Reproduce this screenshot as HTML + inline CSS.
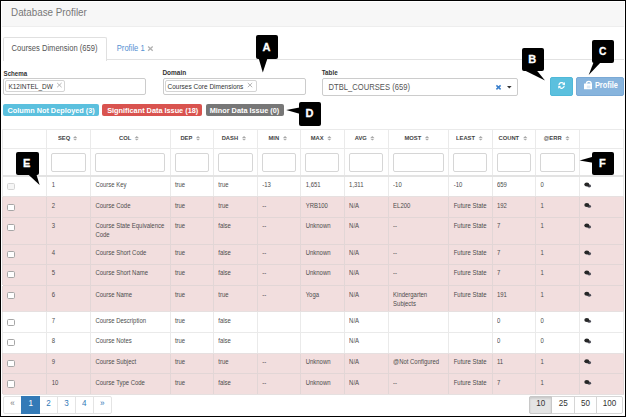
<!DOCTYPE html>
<html><head><meta charset="utf-8"><style>
html,body{margin:0;padding:0;width:626px;height:417px;overflow:hidden;background:#fff}
body{position:relative;font-family:"Liberation Sans", sans-serif}
body>div,body>svg{position:absolute;white-space:nowrap}
</style></head><body>
<div style="left:0.00px;top:0.00px;width:626.00px;height:417.00px;background:#000"></div>
<div style="left:1.00px;top:1.00px;width:624.00px;height:415.00px;background:#fff"></div>
<div style="left:2.00px;top:2.00px;width:622.00px;height:25.00px;background:#f7f7f7;border-bottom:1px solid #eeeeee;box-sizing:border-box"></div>
<div style="left:11.10px;top:7.70px;font-size:9.80px;line-height:9.80px;color:#777;transform:scaleY(1.03);transform-origin:0 8.30px;">Database Profiler</div>
<div style="left:106.00px;top:59.00px;width:517.50px;height:1.00px;background:#e2e2e2"></div>
<div style="left:3.00px;top:37.00px;width:104.00px;height:24.00px;background:#fff;border:1px solid #e0e0e0;border-bottom:none;border-radius:2px 2px 0 0;box-sizing:border-box"></div>
<div style="left:11.60px;top:44.88px;font-size:7.59px;line-height:7.59px;color:#555;transform:scaleY(1.1);transform-origin:0 6.42px;">Courses Dimension (659)</div>
<div style="left:116.80px;top:44.88px;font-size:7.59px;line-height:7.59px;color:#5591d2;transform:scaleY(1.1);transform-origin:0 6.42px;">Profile 1</div>
<svg style="left:0;top:0" width="626" height="417"><path d="M148.1 46.6L152.7 50.8M152.7 46.6L148.1 50.8" stroke="#b0b0b0" stroke-width="1.3"/></svg>
<div style="left:3.50px;top:70.55px;font-size:6.20px;line-height:6.20px;color:#333;font-weight:bold;transform:scaleY(1.1);transform-origin:0 5.25px;">Schema</div>
<div style="left:162.40px;top:70.30px;font-size:6.50px;line-height:6.50px;color:#333;font-weight:bold;transform:scaleY(1.1);transform-origin:0 5.50px;">Domain</div>
<div style="left:321.70px;top:70.47px;font-size:6.30px;line-height:6.30px;color:#333;font-weight:bold;transform:scaleY(1.1);transform-origin:0 5.33px;">Table</div>
<div style="left:3.00px;top:78.00px;width:142.50px;height:16.50px;border:1px solid #ccc;border-radius:2px;box-sizing:border-box;background:#fff"></div>
<div style="left:5.20px;top:80.20px;width:59.40px;height:12.10px;border:1px solid #d4d4d4;border-radius:2px;box-sizing:border-box;background:#fff"></div>
<div style="left:8.40px;top:84.10px;font-size:6.50px;line-height:6.50px;color:#333;transform:scaleY(1.1);transform-origin:0 5.50px;">K12INTEL_DW</div>
<svg style="left:0;top:0" width="626" height="417"><path d="M57.2 83.0L61.6 87.2M61.6 83.0L57.2 87.2" stroke="#aaa" stroke-width="0.9"/></svg>
<div style="left:162.50px;top:78.00px;width:143.00px;height:16.50px;border:1px solid #ccc;border-radius:2px;box-sizing:border-box;background:#fff"></div>
<div style="left:164.60px;top:80.10px;width:92.00px;height:12.30px;border:1px solid #d4d4d4;border-radius:2px;box-sizing:border-box;background:#fff"></div>
<div style="left:167.50px;top:84.10px;font-size:6.50px;line-height:6.50px;color:#333;transform:scaleY(1.1);transform-origin:0 5.50px;">Courses Core Dimensions</div>
<svg style="left:0;top:0" width="626" height="417"><path d="M247.8 83.0L252.2 87.2M252.2 83.0L247.8 87.2" stroke="#aaa" stroke-width="0.9"/></svg>
<div style="left:322.00px;top:78.00px;width:196.00px;height:18.20px;border:1px solid #ccc;border-radius:2px;box-sizing:border-box;background:#fff"></div>
<div style="left:328.60px;top:84.04px;font-size:7.63px;line-height:7.63px;color:#555;transform:scaleY(1.1);transform-origin:0 6.46px;">DTBL_COURSES (659)</div>
<svg style="left:0;top:0" width="626" height="417"><path d="M496.4 85.4L500.6 89.4M500.6 85.4L496.4 89.4" stroke="#3a7fcc" stroke-width="1.5"/></svg>
<svg style="left:0;top:0" width="626" height="417"><polygon points="507,86.1 511.6,86.1 509.3,88.4" fill="#333"/></svg>
<div style="left:549.50px;top:77.00px;width:23.90px;height:18.60px;background:#5bc0de;border:1px solid #4fb8d8;box-sizing:border-box;border-radius:2px"></div>
<svg style="left:0;top:0" width="626" height="417"><g transform="translate(561.6 85.5) scale(0.88) translate(-561.6 -85.5)"><g fill="none" stroke="#fff" stroke-width="1.4"><path d="M558.6 85 A3 3 0 0 1 564 83.4"/><path d="M564.6 85.8 A3 3 0 0 1 559.2 87.4"/></g><polygon points="565.4,81.6 565.4,85 562.2,84.6" fill="#fff"/><polygon points="557.8,89.2 557.8,85.8 561,86.2" fill="#fff"/></g></svg>
<div style="left:576.00px;top:77.00px;width:47.80px;height:18.60px;background:#87b4dd;border:1px solid #7aa9d5;box-sizing:border-box;border-radius:2px"></div>
<svg style="left:0;top:0" width="626" height="417"><path d="M586.4 83.8 A2.3 2.3 0 0 1 591.2 83.8 V84.4" fill="none" stroke="#fff" stroke-width="1.3"/><rect x="584" y="83.6" width="8" height="5.7" rx="0.4" fill="#fff"/><rect x="586.8" y="85.6" width="3.6" height="2.6" fill="#dde9f5"/></svg>
<div style="left:594.90px;top:81.64px;font-size:7.40px;line-height:7.40px;color:#fff;font-weight:bold;transform:scaleY(1.1);transform-origin:0 6.26px;">Profile</div>
<div style="left:3.20px;top:104.30px;width:96.20px;height:12.20px;background:#5bc0de;border-radius:2px"></div>
<div style="left:7.40px;top:106.70px;font-size:7.32px;line-height:7.32px;color:#fff;font-weight:bold;transform:scaleY(1.1);transform-origin:0 6.20px;">Column Not Deployed (3)</div>
<div style="left:102.30px;top:104.30px;width:100.00px;height:12.20px;background:#d9534f;border-radius:2px"></div>
<div style="left:107.20px;top:106.70px;font-size:7.32px;line-height:7.32px;color:#fff;font-weight:bold;transform:scaleY(1.1);transform-origin:0 6.20px;">Significant Data Issue (18)</div>
<div style="left:205.75px;top:104.30px;width:78.25px;height:12.20px;background:#777;border-radius:2px"></div>
<div style="left:209.70px;top:106.70px;font-size:7.32px;line-height:7.32px;color:#fff;font-weight:bold;transform:scaleY(1.1);transform-origin:0 6.20px;">Minor Data Issue (0)</div>
<div style="left:2.50px;top:196.70px;width:620.80px;height:20.60px;background:#f2dede"></div>
<div style="left:2.50px;top:217.30px;width:620.80px;height:26.80px;background:#f2dede"></div>
<div style="left:2.50px;top:244.10px;width:620.80px;height:20.20px;background:#f2dede"></div>
<div style="left:2.50px;top:264.30px;width:620.80px;height:21.20px;background:#f2dede"></div>
<div style="left:2.50px;top:285.50px;width:620.80px;height:26.20px;background:#f2dede"></div>
<div style="left:2.50px;top:353.00px;width:620.80px;height:20.60px;background:#f2dede"></div>
<div style="left:2.50px;top:373.60px;width:620.80px;height:20.60px;background:#f2dede"></div>
<div style="left:2.00px;top:129.40px;width:1.00px;height:18.60px;background:rgb(234,234,234)"></div>
<div style="left:46.30px;top:129.40px;width:1.00px;height:18.60px;background:rgb(234,234,234)"></div>
<div style="left:90.00px;top:129.40px;width:1.00px;height:18.60px;background:rgb(234,234,234)"></div>
<div style="left:169.50px;top:129.40px;width:1.00px;height:18.60px;background:rgb(234,234,234)"></div>
<div style="left:212.90px;top:129.40px;width:1.00px;height:18.60px;background:rgb(234,234,234)"></div>
<div style="left:256.80px;top:129.40px;width:1.00px;height:18.60px;background:rgb(234,234,234)"></div>
<div style="left:300.30px;top:129.40px;width:1.00px;height:18.60px;background:rgb(234,234,234)"></div>
<div style="left:343.70px;top:129.40px;width:1.00px;height:18.60px;background:rgb(234,234,234)"></div>
<div style="left:387.70px;top:129.40px;width:1.00px;height:18.60px;background:rgb(234,234,234)"></div>
<div style="left:448.30px;top:129.40px;width:1.00px;height:18.60px;background:rgb(234,234,234)"></div>
<div style="left:491.60px;top:129.40px;width:1.00px;height:18.60px;background:rgb(234,234,234)"></div>
<div style="left:535.10px;top:129.40px;width:1.00px;height:18.60px;background:rgb(234,234,234)"></div>
<div style="left:579.10px;top:129.40px;width:1.00px;height:18.60px;background:rgb(234,234,234)"></div>
<div style="left:622.80px;top:129.40px;width:1.00px;height:18.60px;background:rgb(234,234,234)"></div>
<div style="left:2.00px;top:148.00px;width:1.00px;height:28.30px;background:rgb(234,234,234)"></div>
<div style="left:46.30px;top:148.00px;width:1.00px;height:28.30px;background:rgb(234,234,234)"></div>
<div style="left:90.00px;top:148.00px;width:1.00px;height:28.30px;background:rgb(234,234,234)"></div>
<div style="left:169.50px;top:148.00px;width:1.00px;height:28.30px;background:rgb(234,234,234)"></div>
<div style="left:212.90px;top:148.00px;width:1.00px;height:28.30px;background:rgb(234,234,234)"></div>
<div style="left:256.80px;top:148.00px;width:1.00px;height:28.30px;background:rgb(234,234,234)"></div>
<div style="left:300.30px;top:148.00px;width:1.00px;height:28.30px;background:rgb(234,234,234)"></div>
<div style="left:343.70px;top:148.00px;width:1.00px;height:28.30px;background:rgb(234,234,234)"></div>
<div style="left:387.70px;top:148.00px;width:1.00px;height:28.30px;background:rgb(234,234,234)"></div>
<div style="left:448.30px;top:148.00px;width:1.00px;height:28.30px;background:rgb(234,234,234)"></div>
<div style="left:491.60px;top:148.00px;width:1.00px;height:28.30px;background:rgb(234,234,234)"></div>
<div style="left:535.10px;top:148.00px;width:1.00px;height:28.30px;background:rgb(234,234,234)"></div>
<div style="left:579.10px;top:148.00px;width:1.00px;height:28.30px;background:rgb(234,234,234)"></div>
<div style="left:622.80px;top:148.00px;width:1.00px;height:28.30px;background:rgb(234,234,234)"></div>
<div style="left:2.00px;top:176.30px;width:1.00px;height:20.40px;background:rgb(234,234,234)"></div>
<div style="left:46.30px;top:176.30px;width:1.00px;height:20.40px;background:rgb(234,234,234)"></div>
<div style="left:90.00px;top:176.30px;width:1.00px;height:20.40px;background:rgb(234,234,234)"></div>
<div style="left:169.50px;top:176.30px;width:1.00px;height:20.40px;background:rgb(234,234,234)"></div>
<div style="left:212.90px;top:176.30px;width:1.00px;height:20.40px;background:rgb(234,234,234)"></div>
<div style="left:256.80px;top:176.30px;width:1.00px;height:20.40px;background:rgb(234,234,234)"></div>
<div style="left:300.30px;top:176.30px;width:1.00px;height:20.40px;background:rgb(234,234,234)"></div>
<div style="left:343.70px;top:176.30px;width:1.00px;height:20.40px;background:rgb(234,234,234)"></div>
<div style="left:387.70px;top:176.30px;width:1.00px;height:20.40px;background:rgb(234,234,234)"></div>
<div style="left:448.30px;top:176.30px;width:1.00px;height:20.40px;background:rgb(234,234,234)"></div>
<div style="left:491.60px;top:176.30px;width:1.00px;height:20.40px;background:rgb(234,234,234)"></div>
<div style="left:535.10px;top:176.30px;width:1.00px;height:20.40px;background:rgb(234,234,234)"></div>
<div style="left:579.10px;top:176.30px;width:1.00px;height:20.40px;background:rgb(234,234,234)"></div>
<div style="left:622.80px;top:176.30px;width:1.00px;height:20.40px;background:rgb(234,234,234)"></div>
<div style="left:2.00px;top:196.70px;width:1.00px;height:20.60px;background:rgb(226,214,214)"></div>
<div style="left:46.30px;top:196.70px;width:1.00px;height:20.60px;background:rgb(226,214,214)"></div>
<div style="left:90.00px;top:196.70px;width:1.00px;height:20.60px;background:rgb(226,214,214)"></div>
<div style="left:169.50px;top:196.70px;width:1.00px;height:20.60px;background:rgb(226,214,214)"></div>
<div style="left:212.90px;top:196.70px;width:1.00px;height:20.60px;background:rgb(226,214,214)"></div>
<div style="left:256.80px;top:196.70px;width:1.00px;height:20.60px;background:rgb(226,214,214)"></div>
<div style="left:300.30px;top:196.70px;width:1.00px;height:20.60px;background:rgb(226,214,214)"></div>
<div style="left:343.70px;top:196.70px;width:1.00px;height:20.60px;background:rgb(226,214,214)"></div>
<div style="left:387.70px;top:196.70px;width:1.00px;height:20.60px;background:rgb(226,214,214)"></div>
<div style="left:448.30px;top:196.70px;width:1.00px;height:20.60px;background:rgb(226,214,214)"></div>
<div style="left:491.60px;top:196.70px;width:1.00px;height:20.60px;background:rgb(226,214,214)"></div>
<div style="left:535.10px;top:196.70px;width:1.00px;height:20.60px;background:rgb(226,214,214)"></div>
<div style="left:579.10px;top:196.70px;width:1.00px;height:20.60px;background:rgb(226,214,214)"></div>
<div style="left:622.80px;top:196.70px;width:1.00px;height:20.60px;background:rgb(226,214,214)"></div>
<div style="left:2.00px;top:217.30px;width:1.00px;height:26.80px;background:rgb(226,214,214)"></div>
<div style="left:46.30px;top:217.30px;width:1.00px;height:26.80px;background:rgb(226,214,214)"></div>
<div style="left:90.00px;top:217.30px;width:1.00px;height:26.80px;background:rgb(226,214,214)"></div>
<div style="left:169.50px;top:217.30px;width:1.00px;height:26.80px;background:rgb(226,214,214)"></div>
<div style="left:212.90px;top:217.30px;width:1.00px;height:26.80px;background:rgb(226,214,214)"></div>
<div style="left:256.80px;top:217.30px;width:1.00px;height:26.80px;background:rgb(226,214,214)"></div>
<div style="left:300.30px;top:217.30px;width:1.00px;height:26.80px;background:rgb(226,214,214)"></div>
<div style="left:343.70px;top:217.30px;width:1.00px;height:26.80px;background:rgb(226,214,214)"></div>
<div style="left:387.70px;top:217.30px;width:1.00px;height:26.80px;background:rgb(226,214,214)"></div>
<div style="left:448.30px;top:217.30px;width:1.00px;height:26.80px;background:rgb(226,214,214)"></div>
<div style="left:491.60px;top:217.30px;width:1.00px;height:26.80px;background:rgb(226,214,214)"></div>
<div style="left:535.10px;top:217.30px;width:1.00px;height:26.80px;background:rgb(226,214,214)"></div>
<div style="left:579.10px;top:217.30px;width:1.00px;height:26.80px;background:rgb(226,214,214)"></div>
<div style="left:622.80px;top:217.30px;width:1.00px;height:26.80px;background:rgb(226,214,214)"></div>
<div style="left:2.00px;top:244.10px;width:1.00px;height:20.20px;background:rgb(226,214,214)"></div>
<div style="left:46.30px;top:244.10px;width:1.00px;height:20.20px;background:rgb(226,214,214)"></div>
<div style="left:90.00px;top:244.10px;width:1.00px;height:20.20px;background:rgb(226,214,214)"></div>
<div style="left:169.50px;top:244.10px;width:1.00px;height:20.20px;background:rgb(226,214,214)"></div>
<div style="left:212.90px;top:244.10px;width:1.00px;height:20.20px;background:rgb(226,214,214)"></div>
<div style="left:256.80px;top:244.10px;width:1.00px;height:20.20px;background:rgb(226,214,214)"></div>
<div style="left:300.30px;top:244.10px;width:1.00px;height:20.20px;background:rgb(226,214,214)"></div>
<div style="left:343.70px;top:244.10px;width:1.00px;height:20.20px;background:rgb(226,214,214)"></div>
<div style="left:387.70px;top:244.10px;width:1.00px;height:20.20px;background:rgb(226,214,214)"></div>
<div style="left:448.30px;top:244.10px;width:1.00px;height:20.20px;background:rgb(226,214,214)"></div>
<div style="left:491.60px;top:244.10px;width:1.00px;height:20.20px;background:rgb(226,214,214)"></div>
<div style="left:535.10px;top:244.10px;width:1.00px;height:20.20px;background:rgb(226,214,214)"></div>
<div style="left:579.10px;top:244.10px;width:1.00px;height:20.20px;background:rgb(226,214,214)"></div>
<div style="left:622.80px;top:244.10px;width:1.00px;height:20.20px;background:rgb(226,214,214)"></div>
<div style="left:2.00px;top:264.30px;width:1.00px;height:21.20px;background:rgb(226,214,214)"></div>
<div style="left:46.30px;top:264.30px;width:1.00px;height:21.20px;background:rgb(226,214,214)"></div>
<div style="left:90.00px;top:264.30px;width:1.00px;height:21.20px;background:rgb(226,214,214)"></div>
<div style="left:169.50px;top:264.30px;width:1.00px;height:21.20px;background:rgb(226,214,214)"></div>
<div style="left:212.90px;top:264.30px;width:1.00px;height:21.20px;background:rgb(226,214,214)"></div>
<div style="left:256.80px;top:264.30px;width:1.00px;height:21.20px;background:rgb(226,214,214)"></div>
<div style="left:300.30px;top:264.30px;width:1.00px;height:21.20px;background:rgb(226,214,214)"></div>
<div style="left:343.70px;top:264.30px;width:1.00px;height:21.20px;background:rgb(226,214,214)"></div>
<div style="left:387.70px;top:264.30px;width:1.00px;height:21.20px;background:rgb(226,214,214)"></div>
<div style="left:448.30px;top:264.30px;width:1.00px;height:21.20px;background:rgb(226,214,214)"></div>
<div style="left:491.60px;top:264.30px;width:1.00px;height:21.20px;background:rgb(226,214,214)"></div>
<div style="left:535.10px;top:264.30px;width:1.00px;height:21.20px;background:rgb(226,214,214)"></div>
<div style="left:579.10px;top:264.30px;width:1.00px;height:21.20px;background:rgb(226,214,214)"></div>
<div style="left:622.80px;top:264.30px;width:1.00px;height:21.20px;background:rgb(226,214,214)"></div>
<div style="left:2.00px;top:285.50px;width:1.00px;height:26.20px;background:rgb(226,214,214)"></div>
<div style="left:46.30px;top:285.50px;width:1.00px;height:26.20px;background:rgb(226,214,214)"></div>
<div style="left:90.00px;top:285.50px;width:1.00px;height:26.20px;background:rgb(226,214,214)"></div>
<div style="left:169.50px;top:285.50px;width:1.00px;height:26.20px;background:rgb(226,214,214)"></div>
<div style="left:212.90px;top:285.50px;width:1.00px;height:26.20px;background:rgb(226,214,214)"></div>
<div style="left:256.80px;top:285.50px;width:1.00px;height:26.20px;background:rgb(226,214,214)"></div>
<div style="left:300.30px;top:285.50px;width:1.00px;height:26.20px;background:rgb(226,214,214)"></div>
<div style="left:343.70px;top:285.50px;width:1.00px;height:26.20px;background:rgb(226,214,214)"></div>
<div style="left:387.70px;top:285.50px;width:1.00px;height:26.20px;background:rgb(226,214,214)"></div>
<div style="left:448.30px;top:285.50px;width:1.00px;height:26.20px;background:rgb(226,214,214)"></div>
<div style="left:491.60px;top:285.50px;width:1.00px;height:26.20px;background:rgb(226,214,214)"></div>
<div style="left:535.10px;top:285.50px;width:1.00px;height:26.20px;background:rgb(226,214,214)"></div>
<div style="left:579.10px;top:285.50px;width:1.00px;height:26.20px;background:rgb(226,214,214)"></div>
<div style="left:622.80px;top:285.50px;width:1.00px;height:26.20px;background:rgb(226,214,214)"></div>
<div style="left:2.00px;top:311.70px;width:1.00px;height:20.60px;background:rgb(234,234,234)"></div>
<div style="left:46.30px;top:311.70px;width:1.00px;height:20.60px;background:rgb(234,234,234)"></div>
<div style="left:90.00px;top:311.70px;width:1.00px;height:20.60px;background:rgb(234,234,234)"></div>
<div style="left:169.50px;top:311.70px;width:1.00px;height:20.60px;background:rgb(234,234,234)"></div>
<div style="left:212.90px;top:311.70px;width:1.00px;height:20.60px;background:rgb(234,234,234)"></div>
<div style="left:256.80px;top:311.70px;width:1.00px;height:20.60px;background:rgb(234,234,234)"></div>
<div style="left:300.30px;top:311.70px;width:1.00px;height:20.60px;background:rgb(234,234,234)"></div>
<div style="left:343.70px;top:311.70px;width:1.00px;height:20.60px;background:rgb(234,234,234)"></div>
<div style="left:387.70px;top:311.70px;width:1.00px;height:20.60px;background:rgb(234,234,234)"></div>
<div style="left:448.30px;top:311.70px;width:1.00px;height:20.60px;background:rgb(234,234,234)"></div>
<div style="left:491.60px;top:311.70px;width:1.00px;height:20.60px;background:rgb(234,234,234)"></div>
<div style="left:535.10px;top:311.70px;width:1.00px;height:20.60px;background:rgb(234,234,234)"></div>
<div style="left:579.10px;top:311.70px;width:1.00px;height:20.60px;background:rgb(234,234,234)"></div>
<div style="left:622.80px;top:311.70px;width:1.00px;height:20.60px;background:rgb(234,234,234)"></div>
<div style="left:2.00px;top:332.30px;width:1.00px;height:20.70px;background:rgb(234,234,234)"></div>
<div style="left:46.30px;top:332.30px;width:1.00px;height:20.70px;background:rgb(234,234,234)"></div>
<div style="left:90.00px;top:332.30px;width:1.00px;height:20.70px;background:rgb(234,234,234)"></div>
<div style="left:169.50px;top:332.30px;width:1.00px;height:20.70px;background:rgb(234,234,234)"></div>
<div style="left:212.90px;top:332.30px;width:1.00px;height:20.70px;background:rgb(234,234,234)"></div>
<div style="left:256.80px;top:332.30px;width:1.00px;height:20.70px;background:rgb(234,234,234)"></div>
<div style="left:300.30px;top:332.30px;width:1.00px;height:20.70px;background:rgb(234,234,234)"></div>
<div style="left:343.70px;top:332.30px;width:1.00px;height:20.70px;background:rgb(234,234,234)"></div>
<div style="left:387.70px;top:332.30px;width:1.00px;height:20.70px;background:rgb(234,234,234)"></div>
<div style="left:448.30px;top:332.30px;width:1.00px;height:20.70px;background:rgb(234,234,234)"></div>
<div style="left:491.60px;top:332.30px;width:1.00px;height:20.70px;background:rgb(234,234,234)"></div>
<div style="left:535.10px;top:332.30px;width:1.00px;height:20.70px;background:rgb(234,234,234)"></div>
<div style="left:579.10px;top:332.30px;width:1.00px;height:20.70px;background:rgb(234,234,234)"></div>
<div style="left:622.80px;top:332.30px;width:1.00px;height:20.70px;background:rgb(234,234,234)"></div>
<div style="left:2.00px;top:353.00px;width:1.00px;height:20.60px;background:rgb(226,214,214)"></div>
<div style="left:46.30px;top:353.00px;width:1.00px;height:20.60px;background:rgb(226,214,214)"></div>
<div style="left:90.00px;top:353.00px;width:1.00px;height:20.60px;background:rgb(226,214,214)"></div>
<div style="left:169.50px;top:353.00px;width:1.00px;height:20.60px;background:rgb(226,214,214)"></div>
<div style="left:212.90px;top:353.00px;width:1.00px;height:20.60px;background:rgb(226,214,214)"></div>
<div style="left:256.80px;top:353.00px;width:1.00px;height:20.60px;background:rgb(226,214,214)"></div>
<div style="left:300.30px;top:353.00px;width:1.00px;height:20.60px;background:rgb(226,214,214)"></div>
<div style="left:343.70px;top:353.00px;width:1.00px;height:20.60px;background:rgb(226,214,214)"></div>
<div style="left:387.70px;top:353.00px;width:1.00px;height:20.60px;background:rgb(226,214,214)"></div>
<div style="left:448.30px;top:353.00px;width:1.00px;height:20.60px;background:rgb(226,214,214)"></div>
<div style="left:491.60px;top:353.00px;width:1.00px;height:20.60px;background:rgb(226,214,214)"></div>
<div style="left:535.10px;top:353.00px;width:1.00px;height:20.60px;background:rgb(226,214,214)"></div>
<div style="left:579.10px;top:353.00px;width:1.00px;height:20.60px;background:rgb(226,214,214)"></div>
<div style="left:622.80px;top:353.00px;width:1.00px;height:20.60px;background:rgb(226,214,214)"></div>
<div style="left:2.00px;top:373.60px;width:1.00px;height:20.60px;background:rgb(226,214,214)"></div>
<div style="left:46.30px;top:373.60px;width:1.00px;height:20.60px;background:rgb(226,214,214)"></div>
<div style="left:90.00px;top:373.60px;width:1.00px;height:20.60px;background:rgb(226,214,214)"></div>
<div style="left:169.50px;top:373.60px;width:1.00px;height:20.60px;background:rgb(226,214,214)"></div>
<div style="left:212.90px;top:373.60px;width:1.00px;height:20.60px;background:rgb(226,214,214)"></div>
<div style="left:256.80px;top:373.60px;width:1.00px;height:20.60px;background:rgb(226,214,214)"></div>
<div style="left:300.30px;top:373.60px;width:1.00px;height:20.60px;background:rgb(226,214,214)"></div>
<div style="left:343.70px;top:373.60px;width:1.00px;height:20.60px;background:rgb(226,214,214)"></div>
<div style="left:387.70px;top:373.60px;width:1.00px;height:20.60px;background:rgb(226,214,214)"></div>
<div style="left:448.30px;top:373.60px;width:1.00px;height:20.60px;background:rgb(226,214,214)"></div>
<div style="left:491.60px;top:373.60px;width:1.00px;height:20.60px;background:rgb(226,214,214)"></div>
<div style="left:535.10px;top:373.60px;width:1.00px;height:20.60px;background:rgb(226,214,214)"></div>
<div style="left:579.10px;top:373.60px;width:1.00px;height:20.60px;background:rgb(226,214,214)"></div>
<div style="left:622.80px;top:373.60px;width:1.00px;height:20.60px;background:rgb(226,214,214)"></div>
<div style="left:2.50px;top:128.90px;width:621.30px;height:1.00px;background:rgb(234,234,234)"></div>
<div style="left:2.50px;top:147.50px;width:621.30px;height:1.00px;background:rgb(234,234,234)"></div>
<div style="left:2.50px;top:175.00px;width:621.30px;height:2.00px;background:rgb(227,227,227)"></div>
<div style="left:2.50px;top:196.20px;width:621.30px;height:1.00px;background:rgb(230,224,224)"></div>
<div style="left:2.50px;top:216.80px;width:621.30px;height:1.00px;background:rgb(226,214,214)"></div>
<div style="left:2.50px;top:243.60px;width:621.30px;height:1.00px;background:rgb(226,214,214)"></div>
<div style="left:2.50px;top:263.80px;width:621.30px;height:1.00px;background:rgb(226,214,214)"></div>
<div style="left:2.50px;top:285.00px;width:621.30px;height:1.00px;background:rgb(226,214,214)"></div>
<div style="left:2.50px;top:311.20px;width:621.30px;height:1.00px;background:rgb(230,224,224)"></div>
<div style="left:2.50px;top:331.80px;width:621.30px;height:1.00px;background:rgb(234,234,234)"></div>
<div style="left:2.50px;top:352.50px;width:621.30px;height:1.00px;background:rgb(230,224,224)"></div>
<div style="left:2.50px;top:373.10px;width:621.30px;height:1.00px;background:rgb(226,214,214)"></div>
<div style="left:2.50px;top:393.70px;width:621.30px;height:1.00px;background:rgb(230,224,224)"></div>
<div style="left:58.00px;top:136.29px;font-size:5.80px;line-height:5.80px;color:#444;font-weight:bold;transform:scaleY(1.08);transform-origin:0 4.91px;">SEQ</div>
<div style="left:119.10px;top:136.29px;font-size:5.80px;line-height:5.80px;color:#444;font-weight:bold;transform:scaleY(1.08);transform-origin:0 4.91px;">COL</div>
<div style="left:180.40px;top:136.29px;font-size:5.80px;line-height:5.80px;color:#444;font-weight:bold;transform:scaleY(1.08);transform-origin:0 4.91px;">DEP</div>
<div style="left:221.70px;top:136.29px;font-size:5.80px;line-height:5.80px;color:#444;font-weight:bold;transform:scaleY(1.08);transform-origin:0 4.91px;">DASH</div>
<div style="left:268.50px;top:136.29px;font-size:5.80px;line-height:5.80px;color:#444;font-weight:bold;transform:scaleY(1.08);transform-origin:0 4.91px;">MIN</div>
<div style="left:310.70px;top:136.29px;font-size:5.80px;line-height:5.80px;color:#444;font-weight:bold;transform:scaleY(1.08);transform-origin:0 4.91px;">MAX</div>
<div style="left:354.70px;top:136.29px;font-size:5.80px;line-height:5.80px;color:#444;font-weight:bold;transform:scaleY(1.08);transform-origin:0 4.91px;">AVG</div>
<div style="left:404.50px;top:136.29px;font-size:5.80px;line-height:5.80px;color:#444;font-weight:bold;transform:scaleY(1.08);transform-origin:0 4.91px;">MOST</div>
<div style="left:456.00px;top:136.29px;font-size:5.80px;line-height:5.80px;color:#444;font-weight:bold;transform:scaleY(1.08);transform-origin:0 4.91px;">LEAST</div>
<div style="left:498.50px;top:136.29px;font-size:5.80px;line-height:5.80px;color:#444;font-weight:bold;transform:scaleY(1.08);transform-origin:0 4.91px;">COUNT</div>
<div style="left:543.70px;top:136.29px;font-size:5.80px;line-height:5.80px;color:#444;font-weight:bold;transform:scaleY(1.08);transform-origin:0 4.91px;">@ERR</div>
<svg style="left:0;top:0" width="626" height="417"><polygon points="73.10,137.9 77.20,137.9 75.15,136.0" fill="#a8a8a8"/><polygon points="73.10,138.7 77.20,138.7 75.15,140.6" fill="#a8a8a8"/><polygon points="134.70,137.9 138.80,137.9 136.75,136.0" fill="#a8a8a8"/><polygon points="134.70,138.7 138.80,138.7 136.75,140.6" fill="#a8a8a8"/><polygon points="196.00,137.9 200.10,137.9 198.05,136.0" fill="#a8a8a8"/><polygon points="196.00,138.7 200.10,138.7 198.05,140.6" fill="#a8a8a8"/><polygon points="242.00,137.9 246.10,137.9 244.05,136.0" fill="#a8a8a8"/><polygon points="242.00,138.7 246.10,138.7 244.05,140.6" fill="#a8a8a8"/><polygon points="283.00,137.9 287.10,137.9 285.05,136.0" fill="#a8a8a8"/><polygon points="283.00,138.7 287.10,138.7 285.05,140.6" fill="#a8a8a8"/><polygon points="327.30,137.9 331.40,137.9 329.35,136.0" fill="#a8a8a8"/><polygon points="327.30,138.7 331.40,138.7 329.35,140.6" fill="#a8a8a8"/><polygon points="370.30,137.9 374.40,137.9 372.35,136.0" fill="#a8a8a8"/><polygon points="370.30,138.7 374.40,138.7 372.35,140.6" fill="#a8a8a8"/><polygon points="425.00,137.9 429.10,137.9 427.05,136.0" fill="#a8a8a8"/><polygon points="425.00,138.7 429.10,138.7 427.05,140.6" fill="#a8a8a8"/><polygon points="478.60,137.9 482.70,137.9 480.65,136.0" fill="#a8a8a8"/><polygon points="478.60,138.7 482.70,138.7 480.65,140.6" fill="#a8a8a8"/><polygon points="523.20,137.9 527.30,137.9 525.25,136.0" fill="#a8a8a8"/><polygon points="523.20,138.7 527.30,138.7 525.25,140.6" fill="#a8a8a8"/><polygon points="565.40,137.9 569.50,137.9 567.45,136.0" fill="#a8a8a8"/><polygon points="565.40,138.7 569.50,138.7 567.45,140.6" fill="#a8a8a8"/></svg>
<div style="left:51.40px;top:153.10px;width:34.30px;height:18.70px;border:1px solid #d6d6d6;border-radius:2px;box-sizing:border-box;background:#fff"></div>
<div style="left:95.10px;top:153.10px;width:70.10px;height:18.70px;border:1px solid #d6d6d6;border-radius:2px;box-sizing:border-box;background:#fff"></div>
<div style="left:174.60px;top:153.10px;width:34.00px;height:18.70px;border:1px solid #d6d6d6;border-radius:2px;box-sizing:border-box;background:#fff"></div>
<div style="left:218.00px;top:153.10px;width:34.50px;height:18.70px;border:1px solid #d6d6d6;border-radius:2px;box-sizing:border-box;background:#fff"></div>
<div style="left:261.90px;top:153.10px;width:34.10px;height:18.70px;border:1px solid #d6d6d6;border-radius:2px;box-sizing:border-box;background:#fff"></div>
<div style="left:305.40px;top:153.10px;width:34.00px;height:18.70px;border:1px solid #d6d6d6;border-radius:2px;box-sizing:border-box;background:#fff"></div>
<div style="left:348.80px;top:153.10px;width:34.60px;height:18.70px;border:1px solid #d6d6d6;border-radius:2px;box-sizing:border-box;background:#fff"></div>
<div style="left:392.80px;top:153.10px;width:51.20px;height:18.70px;border:1px solid #d6d6d6;border-radius:2px;box-sizing:border-box;background:#fff"></div>
<div style="left:453.40px;top:153.10px;width:33.90px;height:18.70px;border:1px solid #d6d6d6;border-radius:2px;box-sizing:border-box;background:#fff"></div>
<div style="left:496.70px;top:153.10px;width:34.10px;height:18.70px;border:1px solid #d6d6d6;border-radius:2px;box-sizing:border-box;background:#fff"></div>
<div style="left:540.20px;top:153.10px;width:34.60px;height:18.70px;border:1px solid #d6d6d6;border-radius:2px;box-sizing:border-box;background:#fff"></div>
<div style="left:7.4px;top:183.10px;width:7.3px;height:7.2px;border:1px solid #d4d4d4;border-radius:1.6px;box-sizing:border-box;background:#f6f6f6"></div>
<div style="left:51.70px;top:181.38px;font-size:5.96px;line-height:8.3px;color:#4d4d4d;transform:scaleY(1.1);transform-origin:0 6.22px;">1</div>
<div style="left:95.40px;top:181.38px;font-size:5.96px;line-height:8.3px;color:#4d4d4d;transform:scaleY(1.1);transform-origin:0 6.22px;">Course Key</div>
<div style="left:174.90px;top:181.38px;font-size:5.96px;line-height:8.3px;color:#4d4d4d;transform:scaleY(1.1);transform-origin:0 6.22px;">true</div>
<div style="left:218.30px;top:181.38px;font-size:5.96px;line-height:8.3px;color:#4d4d4d;transform:scaleY(1.1);transform-origin:0 6.22px;">true</div>
<div style="left:262.20px;top:181.38px;font-size:5.96px;line-height:8.3px;color:#4d4d4d;transform:scaleY(1.1);transform-origin:0 6.22px;">-13</div>
<div style="left:305.70px;top:181.38px;font-size:5.96px;line-height:8.3px;color:#4d4d4d;transform:scaleY(1.1);transform-origin:0 6.22px;">1,651</div>
<div style="left:349.10px;top:181.38px;font-size:5.96px;line-height:8.3px;color:#4d4d4d;transform:scaleY(1.1);transform-origin:0 6.22px;">1,311</div>
<div style="left:393.10px;top:181.38px;font-size:5.96px;line-height:8.3px;color:#4d4d4d;transform:scaleY(1.1);transform-origin:0 6.22px;">-10</div>
<div style="left:453.70px;top:181.38px;font-size:5.96px;line-height:8.3px;color:#4d4d4d;transform:scaleY(1.1);transform-origin:0 6.22px;">-10</div>
<div style="left:497.00px;top:181.38px;font-size:5.96px;line-height:8.3px;color:#4d4d4d;transform:scaleY(1.1);transform-origin:0 6.22px;">659</div>
<div style="left:540.50px;top:181.38px;font-size:5.96px;line-height:8.3px;color:#4d4d4d;transform:scaleY(1.1);transform-origin:0 6.22px;">0</div>
<svg style="left:0;top:0" width="626" height="417"><ellipse cx="589.2" cy="186.00" rx="1.9" ry="1.45" fill="#4a4a55"/><ellipse cx="586.8" cy="184.60" rx="2.5" ry="2.0" fill="#262626"/></svg>
<div style="left:7.4px;top:203.50px;width:7.3px;height:7.2px;border:1px solid #a6a6a6;border-radius:1.6px;box-sizing:border-box;background:#fff"></div>
<div style="left:51.70px;top:201.78px;font-size:5.96px;line-height:8.3px;color:#4d4d4d;transform:scaleY(1.1);transform-origin:0 6.22px;">2</div>
<div style="left:95.40px;top:201.78px;font-size:5.96px;line-height:8.3px;color:#4d4d4d;transform:scaleY(1.1);transform-origin:0 6.22px;">Course Code</div>
<div style="left:174.90px;top:201.78px;font-size:5.96px;line-height:8.3px;color:#4d4d4d;transform:scaleY(1.1);transform-origin:0 6.22px;">true</div>
<div style="left:218.30px;top:201.78px;font-size:5.96px;line-height:8.3px;color:#4d4d4d;transform:scaleY(1.1);transform-origin:0 6.22px;">true</div>
<div style="left:262.20px;top:201.78px;font-size:5.96px;line-height:8.3px;color:#4d4d4d;transform:scaleY(1.1);transform-origin:0 6.22px;">--</div>
<div style="left:305.70px;top:201.78px;font-size:5.96px;line-height:8.3px;color:#4d4d4d;transform:scaleY(1.1);transform-origin:0 6.22px;">YRB100</div>
<div style="left:349.10px;top:201.78px;font-size:5.96px;line-height:8.3px;color:#4d4d4d;transform:scaleY(1.1);transform-origin:0 6.22px;">N/A</div>
<div style="left:393.10px;top:201.78px;font-size:5.96px;line-height:8.3px;color:#4d4d4d;transform:scaleY(1.1);transform-origin:0 6.22px;">EL200</div>
<div style="left:453.70px;top:201.78px;font-size:5.96px;line-height:8.3px;color:#4d4d4d;transform:scaleY(1.1);transform-origin:0 6.22px;">Future State</div>
<div style="left:497.00px;top:201.78px;font-size:5.96px;line-height:8.3px;color:#4d4d4d;transform:scaleY(1.1);transform-origin:0 6.22px;">192</div>
<div style="left:540.50px;top:201.78px;font-size:5.96px;line-height:8.3px;color:#4d4d4d;transform:scaleY(1.1);transform-origin:0 6.22px;">1</div>
<svg style="left:0;top:0" width="626" height="417"><ellipse cx="589.2" cy="206.40" rx="1.9" ry="1.45" fill="#4a4a55"/><ellipse cx="586.8" cy="205.00" rx="2.5" ry="2.0" fill="#262626"/></svg>
<div style="left:7.4px;top:224.10px;width:7.3px;height:7.2px;border:1px solid #a6a6a6;border-radius:1.6px;box-sizing:border-box;background:#fff"></div>
<div style="left:51.70px;top:222.38px;font-size:5.96px;line-height:8.3px;color:#4d4d4d;transform:scaleY(1.1);transform-origin:0 6.22px;">3</div>
<div style="left:95.40px;top:222.38px;font-size:5.96px;line-height:8.3px;color:#4d4d4d;transform:scaleY(1.1);transform-origin:0 6.22px;">Course State Equivalence<br>Code</div>
<div style="left:174.90px;top:222.38px;font-size:5.96px;line-height:8.3px;color:#4d4d4d;transform:scaleY(1.1);transform-origin:0 6.22px;">true</div>
<div style="left:218.30px;top:222.38px;font-size:5.96px;line-height:8.3px;color:#4d4d4d;transform:scaleY(1.1);transform-origin:0 6.22px;">false</div>
<div style="left:262.20px;top:222.38px;font-size:5.96px;line-height:8.3px;color:#4d4d4d;transform:scaleY(1.1);transform-origin:0 6.22px;">--</div>
<div style="left:305.70px;top:222.38px;font-size:5.96px;line-height:8.3px;color:#4d4d4d;transform:scaleY(1.1);transform-origin:0 6.22px;">Unknown</div>
<div style="left:349.10px;top:222.38px;font-size:5.96px;line-height:8.3px;color:#4d4d4d;transform:scaleY(1.1);transform-origin:0 6.22px;">N/A</div>
<div style="left:393.10px;top:222.38px;font-size:5.96px;line-height:8.3px;color:#4d4d4d;transform:scaleY(1.1);transform-origin:0 6.22px;">--</div>
<div style="left:453.70px;top:222.38px;font-size:5.96px;line-height:8.3px;color:#4d4d4d;transform:scaleY(1.1);transform-origin:0 6.22px;">Future State</div>
<div style="left:497.00px;top:222.38px;font-size:5.96px;line-height:8.3px;color:#4d4d4d;transform:scaleY(1.1);transform-origin:0 6.22px;">7</div>
<div style="left:540.50px;top:222.38px;font-size:5.96px;line-height:8.3px;color:#4d4d4d;transform:scaleY(1.1);transform-origin:0 6.22px;">1</div>
<svg style="left:0;top:0" width="626" height="417"><ellipse cx="589.2" cy="227.00" rx="1.9" ry="1.45" fill="#4a4a55"/><ellipse cx="586.8" cy="225.60" rx="2.5" ry="2.0" fill="#262626"/></svg>
<div style="left:7.4px;top:250.90px;width:7.3px;height:7.2px;border:1px solid #a6a6a6;border-radius:1.6px;box-sizing:border-box;background:#fff"></div>
<div style="left:51.70px;top:249.18px;font-size:5.96px;line-height:8.3px;color:#4d4d4d;transform:scaleY(1.1);transform-origin:0 6.22px;">4</div>
<div style="left:95.40px;top:249.18px;font-size:5.96px;line-height:8.3px;color:#4d4d4d;transform:scaleY(1.1);transform-origin:0 6.22px;">Course Short Code</div>
<div style="left:174.90px;top:249.18px;font-size:5.96px;line-height:8.3px;color:#4d4d4d;transform:scaleY(1.1);transform-origin:0 6.22px;">true</div>
<div style="left:218.30px;top:249.18px;font-size:5.96px;line-height:8.3px;color:#4d4d4d;transform:scaleY(1.1);transform-origin:0 6.22px;">false</div>
<div style="left:262.20px;top:249.18px;font-size:5.96px;line-height:8.3px;color:#4d4d4d;transform:scaleY(1.1);transform-origin:0 6.22px;">--</div>
<div style="left:305.70px;top:249.18px;font-size:5.96px;line-height:8.3px;color:#4d4d4d;transform:scaleY(1.1);transform-origin:0 6.22px;">Unknown</div>
<div style="left:349.10px;top:249.18px;font-size:5.96px;line-height:8.3px;color:#4d4d4d;transform:scaleY(1.1);transform-origin:0 6.22px;">N/A</div>
<div style="left:393.10px;top:249.18px;font-size:5.96px;line-height:8.3px;color:#4d4d4d;transform:scaleY(1.1);transform-origin:0 6.22px;">--</div>
<div style="left:453.70px;top:249.18px;font-size:5.96px;line-height:8.3px;color:#4d4d4d;transform:scaleY(1.1);transform-origin:0 6.22px;">Future State</div>
<div style="left:497.00px;top:249.18px;font-size:5.96px;line-height:8.3px;color:#4d4d4d;transform:scaleY(1.1);transform-origin:0 6.22px;">7</div>
<div style="left:540.50px;top:249.18px;font-size:5.96px;line-height:8.3px;color:#4d4d4d;transform:scaleY(1.1);transform-origin:0 6.22px;">1</div>
<svg style="left:0;top:0" width="626" height="417"><ellipse cx="589.2" cy="253.80" rx="1.9" ry="1.45" fill="#4a4a55"/><ellipse cx="586.8" cy="252.40" rx="2.5" ry="2.0" fill="#262626"/></svg>
<div style="left:7.4px;top:271.10px;width:7.3px;height:7.2px;border:1px solid #a6a6a6;border-radius:1.6px;box-sizing:border-box;background:#fff"></div>
<div style="left:51.70px;top:269.38px;font-size:5.96px;line-height:8.3px;color:#4d4d4d;transform:scaleY(1.1);transform-origin:0 6.22px;">5</div>
<div style="left:95.40px;top:269.38px;font-size:5.96px;line-height:8.3px;color:#4d4d4d;transform:scaleY(1.1);transform-origin:0 6.22px;">Course Short Name</div>
<div style="left:174.90px;top:269.38px;font-size:5.96px;line-height:8.3px;color:#4d4d4d;transform:scaleY(1.1);transform-origin:0 6.22px;">true</div>
<div style="left:218.30px;top:269.38px;font-size:5.96px;line-height:8.3px;color:#4d4d4d;transform:scaleY(1.1);transform-origin:0 6.22px;">false</div>
<div style="left:262.20px;top:269.38px;font-size:5.96px;line-height:8.3px;color:#4d4d4d;transform:scaleY(1.1);transform-origin:0 6.22px;">--</div>
<div style="left:305.70px;top:269.38px;font-size:5.96px;line-height:8.3px;color:#4d4d4d;transform:scaleY(1.1);transform-origin:0 6.22px;">Unknown</div>
<div style="left:349.10px;top:269.38px;font-size:5.96px;line-height:8.3px;color:#4d4d4d;transform:scaleY(1.1);transform-origin:0 6.22px;">N/A</div>
<div style="left:393.10px;top:269.38px;font-size:5.96px;line-height:8.3px;color:#4d4d4d;transform:scaleY(1.1);transform-origin:0 6.22px;">--</div>
<div style="left:453.70px;top:269.38px;font-size:5.96px;line-height:8.3px;color:#4d4d4d;transform:scaleY(1.1);transform-origin:0 6.22px;">Future State</div>
<div style="left:497.00px;top:269.38px;font-size:5.96px;line-height:8.3px;color:#4d4d4d;transform:scaleY(1.1);transform-origin:0 6.22px;">7</div>
<div style="left:540.50px;top:269.38px;font-size:5.96px;line-height:8.3px;color:#4d4d4d;transform:scaleY(1.1);transform-origin:0 6.22px;">1</div>
<svg style="left:0;top:0" width="626" height="417"><ellipse cx="589.2" cy="274.00" rx="1.9" ry="1.45" fill="#4a4a55"/><ellipse cx="586.8" cy="272.60" rx="2.5" ry="2.0" fill="#262626"/></svg>
<div style="left:7.4px;top:292.30px;width:7.3px;height:7.2px;border:1px solid #a6a6a6;border-radius:1.6px;box-sizing:border-box;background:#fff"></div>
<div style="left:51.70px;top:290.58px;font-size:5.96px;line-height:8.3px;color:#4d4d4d;transform:scaleY(1.1);transform-origin:0 6.22px;">6</div>
<div style="left:95.40px;top:290.58px;font-size:5.96px;line-height:8.3px;color:#4d4d4d;transform:scaleY(1.1);transform-origin:0 6.22px;">Course Name</div>
<div style="left:174.90px;top:290.58px;font-size:5.96px;line-height:8.3px;color:#4d4d4d;transform:scaleY(1.1);transform-origin:0 6.22px;">true</div>
<div style="left:218.30px;top:290.58px;font-size:5.96px;line-height:8.3px;color:#4d4d4d;transform:scaleY(1.1);transform-origin:0 6.22px;">true</div>
<div style="left:262.20px;top:290.58px;font-size:5.96px;line-height:8.3px;color:#4d4d4d;transform:scaleY(1.1);transform-origin:0 6.22px;">--</div>
<div style="left:305.70px;top:290.58px;font-size:5.96px;line-height:8.3px;color:#4d4d4d;transform:scaleY(1.1);transform-origin:0 6.22px;">Yoga</div>
<div style="left:349.10px;top:290.58px;font-size:5.96px;line-height:8.3px;color:#4d4d4d;transform:scaleY(1.1);transform-origin:0 6.22px;">N/A</div>
<div style="left:393.10px;top:290.58px;font-size:5.96px;line-height:8.3px;color:#4d4d4d;transform:scaleY(1.1);transform-origin:0 6.22px;">Kindergarten<br>Subjects</div>
<div style="left:453.70px;top:290.58px;font-size:5.96px;line-height:8.3px;color:#4d4d4d;transform:scaleY(1.1);transform-origin:0 6.22px;">Future State</div>
<div style="left:497.00px;top:290.58px;font-size:5.96px;line-height:8.3px;color:#4d4d4d;transform:scaleY(1.1);transform-origin:0 6.22px;">191</div>
<div style="left:540.50px;top:290.58px;font-size:5.96px;line-height:8.3px;color:#4d4d4d;transform:scaleY(1.1);transform-origin:0 6.22px;">1</div>
<svg style="left:0;top:0" width="626" height="417"><ellipse cx="589.2" cy="295.20" rx="1.9" ry="1.45" fill="#4a4a55"/><ellipse cx="586.8" cy="293.80" rx="2.5" ry="2.0" fill="#262626"/></svg>
<div style="left:7.4px;top:318.50px;width:7.3px;height:7.2px;border:1px solid #a6a6a6;border-radius:1.6px;box-sizing:border-box;background:#fff"></div>
<div style="left:51.70px;top:316.78px;font-size:5.96px;line-height:8.3px;color:#4d4d4d;transform:scaleY(1.1);transform-origin:0 6.22px;">7</div>
<div style="left:95.40px;top:316.78px;font-size:5.96px;line-height:8.3px;color:#4d4d4d;transform:scaleY(1.1);transform-origin:0 6.22px;">Course Description</div>
<div style="left:174.90px;top:316.78px;font-size:5.96px;line-height:8.3px;color:#4d4d4d;transform:scaleY(1.1);transform-origin:0 6.22px;">true</div>
<div style="left:218.30px;top:316.78px;font-size:5.96px;line-height:8.3px;color:#4d4d4d;transform:scaleY(1.1);transform-origin:0 6.22px;">false</div>
<div style="left:349.10px;top:316.78px;font-size:5.96px;line-height:8.3px;color:#4d4d4d;transform:scaleY(1.1);transform-origin:0 6.22px;">N/A</div>
<div style="left:497.00px;top:316.78px;font-size:5.96px;line-height:8.3px;color:#4d4d4d;transform:scaleY(1.1);transform-origin:0 6.22px;">0</div>
<div style="left:540.50px;top:316.78px;font-size:5.96px;line-height:8.3px;color:#4d4d4d;transform:scaleY(1.1);transform-origin:0 6.22px;">0</div>
<svg style="left:0;top:0" width="626" height="417"><ellipse cx="589.2" cy="321.40" rx="1.9" ry="1.45" fill="#4a4a55"/><ellipse cx="586.8" cy="320.00" rx="2.5" ry="2.0" fill="#262626"/></svg>
<div style="left:7.4px;top:339.10px;width:7.3px;height:7.2px;border:1px solid #a6a6a6;border-radius:1.6px;box-sizing:border-box;background:#fff"></div>
<div style="left:51.70px;top:337.38px;font-size:5.96px;line-height:8.3px;color:#4d4d4d;transform:scaleY(1.1);transform-origin:0 6.22px;">8</div>
<div style="left:95.40px;top:337.38px;font-size:5.96px;line-height:8.3px;color:#4d4d4d;transform:scaleY(1.1);transform-origin:0 6.22px;">Course Notes</div>
<div style="left:174.90px;top:337.38px;font-size:5.96px;line-height:8.3px;color:#4d4d4d;transform:scaleY(1.1);transform-origin:0 6.22px;">true</div>
<div style="left:218.30px;top:337.38px;font-size:5.96px;line-height:8.3px;color:#4d4d4d;transform:scaleY(1.1);transform-origin:0 6.22px;">false</div>
<div style="left:349.10px;top:337.38px;font-size:5.96px;line-height:8.3px;color:#4d4d4d;transform:scaleY(1.1);transform-origin:0 6.22px;">N/A</div>
<div style="left:497.00px;top:337.38px;font-size:5.96px;line-height:8.3px;color:#4d4d4d;transform:scaleY(1.1);transform-origin:0 6.22px;">0</div>
<div style="left:540.50px;top:337.38px;font-size:5.96px;line-height:8.3px;color:#4d4d4d;transform:scaleY(1.1);transform-origin:0 6.22px;">0</div>
<svg style="left:0;top:0" width="626" height="417"><ellipse cx="589.2" cy="342.00" rx="1.9" ry="1.45" fill="#4a4a55"/><ellipse cx="586.8" cy="340.60" rx="2.5" ry="2.0" fill="#262626"/></svg>
<div style="left:7.4px;top:359.80px;width:7.3px;height:7.2px;border:1px solid #a6a6a6;border-radius:1.6px;box-sizing:border-box;background:#fff"></div>
<div style="left:51.70px;top:358.08px;font-size:5.96px;line-height:8.3px;color:#4d4d4d;transform:scaleY(1.1);transform-origin:0 6.22px;">9</div>
<div style="left:95.40px;top:358.08px;font-size:5.96px;line-height:8.3px;color:#4d4d4d;transform:scaleY(1.1);transform-origin:0 6.22px;">Course Subject</div>
<div style="left:174.90px;top:358.08px;font-size:5.96px;line-height:8.3px;color:#4d4d4d;transform:scaleY(1.1);transform-origin:0 6.22px;">true</div>
<div style="left:218.30px;top:358.08px;font-size:5.96px;line-height:8.3px;color:#4d4d4d;transform:scaleY(1.1);transform-origin:0 6.22px;">true</div>
<div style="left:262.20px;top:358.08px;font-size:5.96px;line-height:8.3px;color:#4d4d4d;transform:scaleY(1.1);transform-origin:0 6.22px;">--</div>
<div style="left:305.70px;top:358.08px;font-size:5.96px;line-height:8.3px;color:#4d4d4d;transform:scaleY(1.1);transform-origin:0 6.22px;">Unknown</div>
<div style="left:349.10px;top:358.08px;font-size:5.96px;line-height:8.3px;color:#4d4d4d;transform:scaleY(1.1);transform-origin:0 6.22px;">N/A</div>
<div style="left:393.10px;top:358.08px;font-size:5.96px;line-height:8.3px;color:#4d4d4d;transform:scaleY(1.1);transform-origin:0 6.22px;">@Not Configured</div>
<div style="left:453.70px;top:358.08px;font-size:5.96px;line-height:8.3px;color:#4d4d4d;transform:scaleY(1.1);transform-origin:0 6.22px;">Future State</div>
<div style="left:497.00px;top:358.08px;font-size:5.96px;line-height:8.3px;color:#4d4d4d;transform:scaleY(1.1);transform-origin:0 6.22px;">11</div>
<div style="left:540.50px;top:358.08px;font-size:5.96px;line-height:8.3px;color:#4d4d4d;transform:scaleY(1.1);transform-origin:0 6.22px;">1</div>
<svg style="left:0;top:0" width="626" height="417"><ellipse cx="589.2" cy="362.70" rx="1.9" ry="1.45" fill="#4a4a55"/><ellipse cx="586.8" cy="361.30" rx="2.5" ry="2.0" fill="#262626"/></svg>
<div style="left:7.4px;top:380.40px;width:7.3px;height:7.2px;border:1px solid #a6a6a6;border-radius:1.6px;box-sizing:border-box;background:#fff"></div>
<div style="left:51.70px;top:378.68px;font-size:5.96px;line-height:8.3px;color:#4d4d4d;transform:scaleY(1.1);transform-origin:0 6.22px;">10</div>
<div style="left:95.40px;top:378.68px;font-size:5.96px;line-height:8.3px;color:#4d4d4d;transform:scaleY(1.1);transform-origin:0 6.22px;">Course Type Code</div>
<div style="left:174.90px;top:378.68px;font-size:5.96px;line-height:8.3px;color:#4d4d4d;transform:scaleY(1.1);transform-origin:0 6.22px;">true</div>
<div style="left:218.30px;top:378.68px;font-size:5.96px;line-height:8.3px;color:#4d4d4d;transform:scaleY(1.1);transform-origin:0 6.22px;">false</div>
<div style="left:262.20px;top:378.68px;font-size:5.96px;line-height:8.3px;color:#4d4d4d;transform:scaleY(1.1);transform-origin:0 6.22px;">--</div>
<div style="left:305.70px;top:378.68px;font-size:5.96px;line-height:8.3px;color:#4d4d4d;transform:scaleY(1.1);transform-origin:0 6.22px;">Unknown</div>
<div style="left:349.10px;top:378.68px;font-size:5.96px;line-height:8.3px;color:#4d4d4d;transform:scaleY(1.1);transform-origin:0 6.22px;">N/A</div>
<div style="left:393.10px;top:378.68px;font-size:5.96px;line-height:8.3px;color:#4d4d4d;transform:scaleY(1.1);transform-origin:0 6.22px;">--</div>
<div style="left:453.70px;top:378.68px;font-size:5.96px;line-height:8.3px;color:#4d4d4d;transform:scaleY(1.1);transform-origin:0 6.22px;">Future State</div>
<div style="left:497.00px;top:378.68px;font-size:5.96px;line-height:8.3px;color:#4d4d4d;transform:scaleY(1.1);transform-origin:0 6.22px;">7</div>
<div style="left:540.50px;top:378.68px;font-size:5.96px;line-height:8.3px;color:#4d4d4d;transform:scaleY(1.1);transform-origin:0 6.22px;">1</div>
<svg style="left:0;top:0" width="626" height="417"><ellipse cx="589.2" cy="383.30" rx="1.9" ry="1.45" fill="#4a4a55"/><ellipse cx="586.8" cy="381.90" rx="2.5" ry="2.0" fill="#262626"/></svg>
<div style="left:3.45px;top:395.50px;width:108.35px;height:18.30px;background:#fff;border:1px solid #e4e4e4;box-sizing:border-box;border-radius:2px"></div>
<div style="left:21.20px;top:395.50px;width:1.00px;height:18.30px;background:#e4e4e4"></div>
<div style="left:39.20px;top:395.50px;width:1.00px;height:18.30px;background:#e4e4e4"></div>
<div style="left:57.00px;top:395.50px;width:1.00px;height:18.30px;background:#e4e4e4"></div>
<div style="left:74.80px;top:395.50px;width:1.00px;height:18.30px;background:#e4e4e4"></div>
<div style="left:92.80px;top:395.50px;width:1.00px;height:18.30px;background:#e4e4e4"></div>
<div style="left:21.20px;top:395.50px;width:19.00px;height:18.30px;background:#337ab7"></div>
<div style="left:3.45px;top:400.04px;width:18.25px;line-height:8.1px;text-align:center;font-size:8.1px;color:#777;transform:scaleY(1.1);transform-origin:0 6.86px;">&#171;</div>
<div style="left:21.70px;top:400.04px;width:18.00px;line-height:8.1px;text-align:center;font-size:8.1px;color:#fff;transform:scaleY(1.1);transform-origin:0 6.86px;">1</div>
<div style="left:39.70px;top:400.04px;width:17.80px;line-height:8.1px;text-align:center;font-size:8.1px;color:#337ab7;transform:scaleY(1.1);transform-origin:0 6.86px;">2</div>
<div style="left:57.50px;top:400.04px;width:17.80px;line-height:8.1px;text-align:center;font-size:8.1px;color:#337ab7;transform:scaleY(1.1);transform-origin:0 6.86px;">3</div>
<div style="left:75.30px;top:400.04px;width:18.00px;line-height:8.1px;text-align:center;font-size:8.1px;color:#337ab7;transform:scaleY(1.1);transform-origin:0 6.86px;">4</div>
<div style="left:93.30px;top:400.04px;width:17.90px;line-height:8.1px;text-align:center;font-size:8.1px;color:#337ab7;transform:scaleY(1.1);transform-origin:0 6.86px;">&#187;</div>
<div style="left:529.40px;top:395.50px;width:93.70px;height:18.30px;background:#fff;border:1px solid #d6d6d6;box-sizing:border-box;border-radius:2px"></div>
<div style="left:529.40px;top:395.50px;width:23.10px;height:18.30px;background:#e4e4e4;border:1px solid #c8c8c8;box-sizing:border-box;border-radius:2px 0 0 2px;box-shadow:inset 0 1.5px 2px rgba(0,0,0,.12)"></div>
<div style="left:573.90px;top:395.50px;width:1.00px;height:18.30px;background:#d6d6d6"></div>
<div style="left:596.00px;top:395.50px;width:1.00px;height:18.30px;background:#d6d6d6"></div>
<div style="left:529.40px;top:400.04px;width:22.60px;line-height:8.1px;text-align:center;font-size:8.1px;color:#333;transform:scaleY(1.1);transform-origin:0 6.86px;">10</div>
<div style="left:552.00px;top:400.04px;width:22.40px;line-height:8.1px;text-align:center;font-size:8.1px;color:#333;transform:scaleY(1.1);transform-origin:0 6.86px;">25</div>
<div style="left:574.40px;top:400.04px;width:22.10px;line-height:8.1px;text-align:center;font-size:8.1px;color:#333;transform:scaleY(1.1);transform-origin:0 6.86px;">50</div>
<div style="left:596.50px;top:400.04px;width:26.00px;line-height:8.1px;text-align:center;font-size:8.1px;color:#333;transform:scaleY(1.1);transform-origin:0 6.86px;">100</div>
<div style="left:255.90px;top:35.40px;width:22.20px;height:23.40px;background:#000;border-radius:2px"></div>
<svg style="left:0;top:0" width="626" height="417"><polygon points="258.60,58.00 267.60,58.00 262.80,72.60" fill="#000"/></svg>
<div style="left:262.50px;top:41.89px;font-size:11.00px;line-height:11.00px;color:#fff;font-weight:bold;-webkit-text-stroke:0.3px #fff;transform:scaleY(1.0);transform-origin:0 9.31px;">A</div>
<div style="left:521.60px;top:47.80px;width:22.00px;height:22.80px;background:#000;border-radius:2px"></div>
<svg style="left:0;top:0" width="626" height="417"><polygon points="523.80,70.00 536.40,70.00 545.00,80.50" fill="#000"/></svg>
<div style="left:528.30px;top:53.79px;font-size:11.00px;line-height:11.00px;color:#fff;font-weight:bold;-webkit-text-stroke:0.3px #fff;transform:scaleY(1.0);transform-origin:0 9.31px;">B</div>
<div style="left:591.50px;top:39.70px;width:22.80px;height:23.00px;background:#000;border-radius:2px"></div>
<svg style="left:0;top:0" width="626" height="417"><polygon points="593.70,62.00 601.00,62.00 588.70,75.00" fill="#000"/></svg>
<div style="left:598.90px;top:46.97px;font-size:10.20px;line-height:10.20px;color:#fff;font-weight:bold;-webkit-text-stroke:0.3px #fff;transform:scaleY(1.0);transform-origin:0 8.63px;">C</div>
<div style="left:298.70px;top:102.20px;width:22.50px;height:23.50px;background:#000;border-radius:2px"></div>
<svg style="left:0;top:0" width="626" height="417"><polygon points="299.50,107.50 299.50,113.70 286.20,109.90" fill="#000"/></svg>
<div style="left:305.60px;top:108.49px;font-size:11.00px;line-height:11.00px;color:#fff;font-weight:bold;-webkit-text-stroke:0.3px #fff;transform:scaleY(1.0);transform-origin:0 9.31px;">D</div>
<div style="left:16.20px;top:151.80px;width:22.40px;height:23.60px;background:#000;border-radius:2px"></div>
<svg style="left:0;top:0" width="626" height="417"><polygon points="28.80,175.00 36.60,175.00 39.60,185.00" fill="#000"/></svg>
<div style="left:23.10px;top:157.79px;font-size:11.00px;line-height:11.00px;color:#fff;font-weight:bold;-webkit-text-stroke:0.3px #fff;transform:scaleY(1.0);transform-origin:0 9.31px;">E</div>
<div style="left:592.00px;top:152.00px;width:21.80px;height:23.00px;background:#000;border-radius:2px"></div>
<svg style="left:0;top:0" width="626" height="417"><polygon points="592.80,156.80 592.80,162.80 579.60,160.60" fill="#000"/></svg>
<div style="left:599.10px;top:158.09px;font-size:11.00px;line-height:11.00px;color:#fff;font-weight:bold;-webkit-text-stroke:0.3px #fff;transform:scaleY(1.0);transform-origin:0 9.31px;">F</div>
</body></html>
